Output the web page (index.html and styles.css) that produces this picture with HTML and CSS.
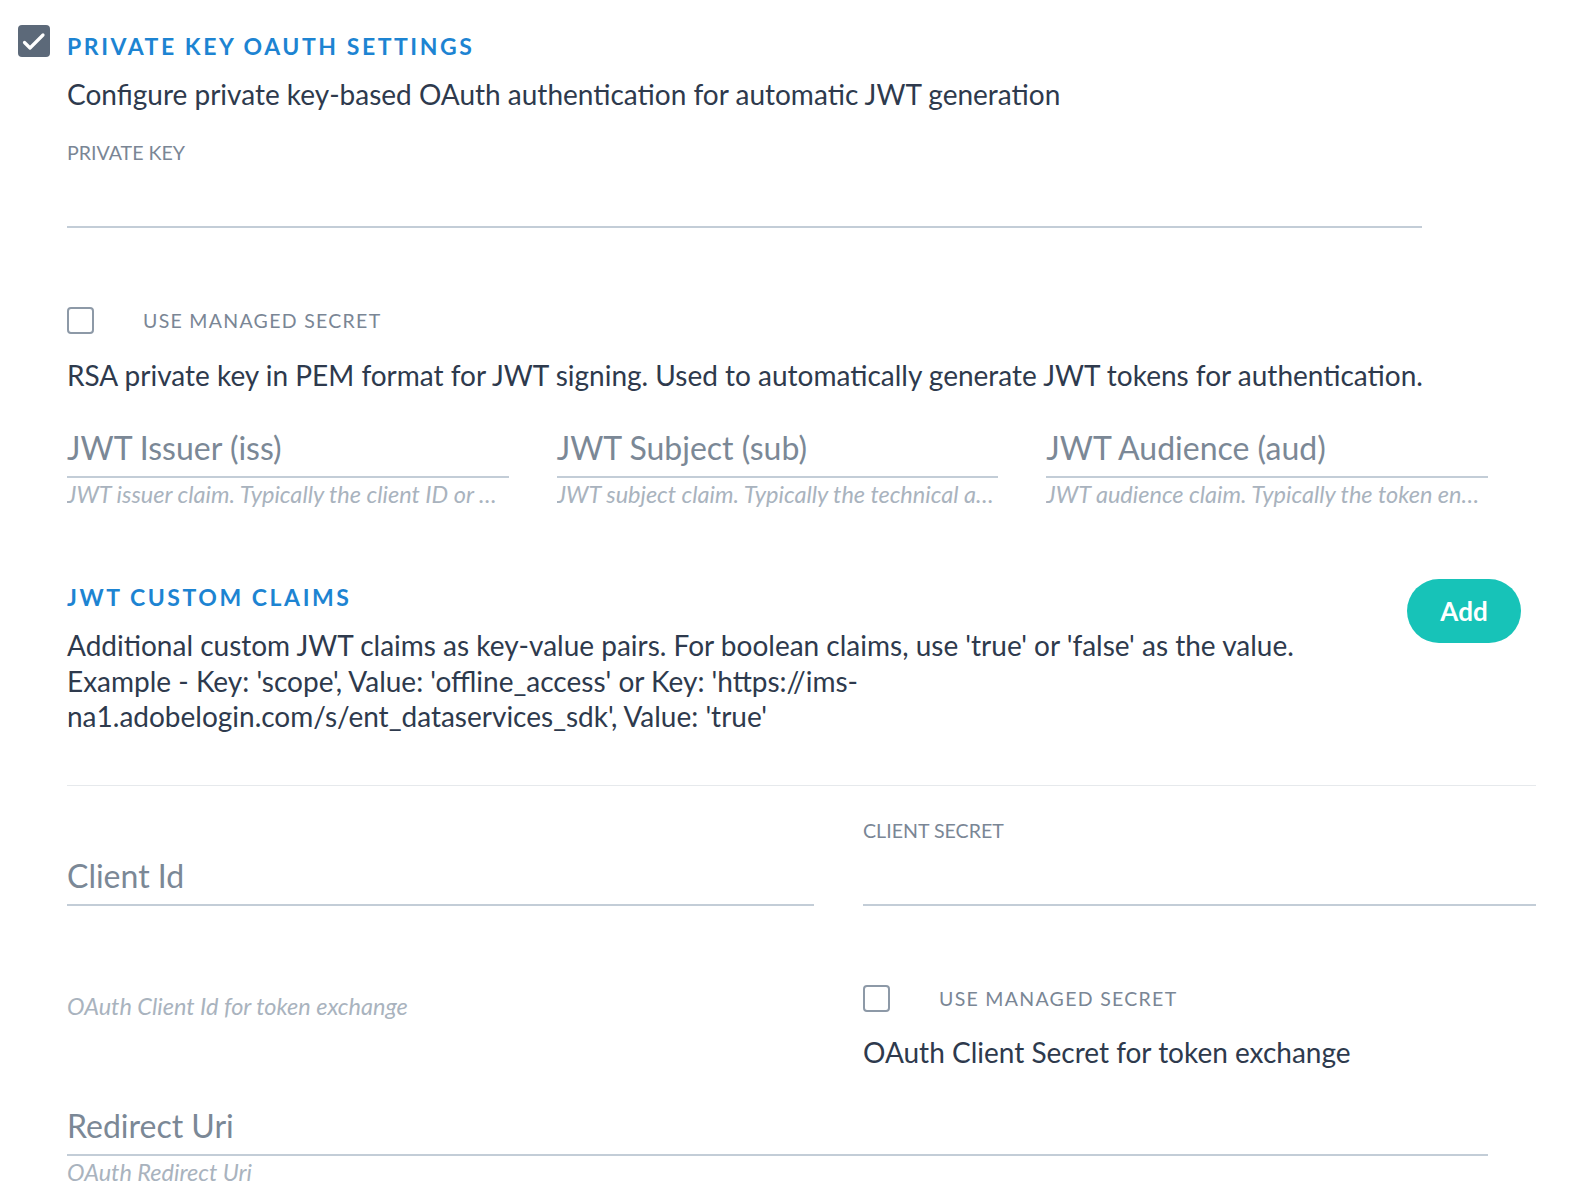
FILE: index.html
```html
<!DOCTYPE html>
<html lang="en">
<head>
<meta charset="utf-8">
<title>Private Key OAuth Settings</title>
<link rel="stylesheet" href="styles.css">
</head>
<body>
<div class="page">
  <div class="section">
    <span class="box box-checked">
      <svg viewBox="0 0 32 32" width="32" height="32" aria-hidden="true"><path d="M6.5 17.5 L12 23 L25 10" fill="none" stroke="#fff" stroke-width="3.2" stroke-linecap="round" stroke-linejoin="round"/></svg>
    </span>
    <div class="section-body">
      <h2 class="section-title">PRIVATE KEY OAUTH SETTINGS</h2>
      <p class="desc desc-first">Configure private key-based OAuth authentication for automatic JWT generation</p>

      <div class="field field-key">
        <div class="small-label">PRIVATE KEY</div>
        <div class="line-input line-input-tall"></div>
      </div>

      <label class="managed">
        <span class="box box-empty"></span>
        <span class="managed-text">USE MANAGED SECRET</span>
      </label>
      <p class="desc desc-after-managed">RSA private key in PEM format for JWT signing. Used to automatically generate JWT tokens for authentication.</p>

      <div class="jwt-row">
        <div class="field">
          <div class="line-input"><span class="placeholder">JWT Issuer (iss)</span></div>
          <div class="helper">JWT issuer claim. Typically the client ID or organization identifier</div>
        </div>
        <div class="field">
          <div class="line-input"><span class="placeholder">JWT Subject (sub)</span></div>
          <div class="helper">JWT subject claim. Typically the technical account ID</div>
        </div>
        <div class="field">
          <div class="line-input"><span class="placeholder">JWT Audience (aud)</span></div>
          <div class="helper">JWT audience claim. Typically the token endpoint URL</div>
        </div>
      </div>

      <div class="claims">
        <div class="claims-text">
          <h3 class="section-title claims-title">JWT CUSTOM CLAIMS</h3>
          <p class="desc claims-desc">Additional custom JWT claims as key-value pairs. For boolean claims, use 'true' or 'false' as the value. Example - Key: 'scope', Value: 'offline_access' or Key: 'https://ims-na1.adobelogin.com/s/ent_dataservices_sdk', Value: 'true'</p>
        </div>
        <button class="add-btn" type="button">Add</button>
      </div>

      <hr class="sep">

      <div class="client-row">
        <div class="field client-id">
          <div class="small-label label-spacer">&nbsp;</div>
          <div class="line-input line-input-tall"><span class="placeholder">Client Id</span></div>
          <div class="helper helper-client">OAuth Client Id for token exchange</div>
        </div>
        <div class="field client-secret">
          <div class="small-label">CLIENT SECRET</div>
          <div class="line-input line-input-tall"></div>
          <label class="managed managed-client">
            <span class="box box-empty"></span>
            <span class="managed-text">USE MANAGED SECRET</span>
          </label>
          <p class="desc desc-after-managed desc-client">OAuth Client Secret for token exchange</p>
        </div>
      </div>

      <div class="field redirect">
        <div class="line-input"><span class="placeholder">Redirect Uri</span></div>
        <div class="helper">OAuth Redirect Uri</div>
      </div>
    </div>
  </div>
</div>
</body>
</html>
```

FILE: styles.css
```css
* { box-sizing: border-box; }

html, body {
  margin: 0;
  padding: 0;
  background: #ffffff;
}

body {
  font-family: Lato, "Open Sans", "Liberation Sans", sans-serif;
  color: #2e3a4d;
}

.page {
  padding: 25px 48px 0 18px;
}

.section {
  display: flex;
  align-items: flex-start;
  gap: 17px;
}

.section-body {
  flex: 1;
  min-width: 0;
}

.box {
  display: inline-flex;
  align-items: center;
  justify-content: center;
  flex: none;
  border-radius: 3px;
}

.box-checked {
  width: 32px;
  height: 32px;
  background: #5c6979;
  border-radius: 4px;
}

.box-empty {
  width: 27px;
  height: 27px;
  border: 2px solid #8d99a7;
  border-radius: 4px;
  background: #fff;
}

.section-title {
  margin: 7px 0 0;
  font-size: 23px;
  line-height: 28px;
  font-weight: 700;
  letter-spacing: 2.55px;
  color: #1d84d2;
}

.desc {
  margin: 0;
  font-size: 28px;
  line-height: 36px;
  color: #2e3a4d;
}

.desc-first { margin-top: 16px; }

.small-label {
  font-size: 19.6px;
  line-height: 24px;
  color: #7a8695;
}

.field { min-width: 0; }

.field-key {
  margin-top: 29px;
  width: 1355px;
}

.line-input {
  display: flex;
  align-items: flex-end;
  height: 49px;
  border-bottom: 2px solid #c3cdd7;
  padding-bottom: 8px;
}

.line-input-tall { height: 63px; }

.placeholder {
  font-size: 32px;
  line-height: 40px;
  color: #7b8896;
  white-space: nowrap;
}

.managed {
  display: flex;
  align-items: center;
  margin-top: 79px;
  height: 27px;
}

.managed-text {
  margin-left: 49px;
  font-size: 19.5px;
  letter-spacing: 1.3px;
  color: #7a8695;
}

.desc-after-managed { margin-top: 23px; }

.jwt-row {
  display: grid;
  grid-template-columns: repeat(3, minmax(0, 1fr));
  column-gap: 48px;
  width: 1421px;
  margin-top: 36px;
}

.helper {
  margin-top: 3px;
  font-size: 23.5px;
  line-height: 26px;
  font-style: italic;
  color: #a9b3be;
  white-space: nowrap;
  overflow: hidden;
  text-overflow: ellipsis;
}

.claims {
  display: flex;
  align-items: flex-start;
  margin-top: 72px;
  padding-right: 15px;
}

.claims-text {
  flex: 1;
  min-width: 0;
  padding-right: 27px;
}

.claims-title { margin-top: 4px; }

.claims-desc {
  margin-top: 17px;
  line-height: 35.5px;
}

.add-btn {
  flex: none;
  width: 114px;
  height: 64px;
  border: none;
  border-radius: 32px;
  background: #17c3b8;
  color: #ffffff;
  font-family: Lato, "Open Sans", "Liberation Sans", sans-serif;
  font-size: 26px;
  font-weight: 700;
  cursor: pointer;
}

.sep {
  margin: 50px 0 0;
  border: none;
  border-top: 1px solid #e6e9ec;
}

.client-row {
  display: grid;
  grid-template-columns: 747px minmax(0, 1fr);
  column-gap: 49px;
  margin-top: 33px;
}

.helper-client { margin-top: 87px; }

.managed-client { margin-top: 79px; }

.desc-client { margin-top: 22px; }

.redirect {
  width: 1421px;
  margin-top: 37px;
}
```
